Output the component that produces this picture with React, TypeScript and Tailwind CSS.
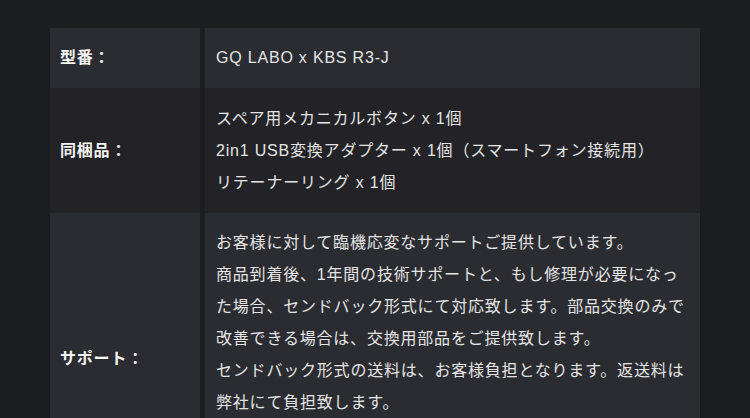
const specs = [
  {
    label: "型番：",
    lines: ["GQ LABO x KBS R3-J"],
    tone: "bg-[#2b2c31]",
    pad: "py-[14px]",
  },
  {
    label: "同梱品：",
    lines: [
      "スペア用メカニカルボタン x 1個",
      "2in1 USB変換アダプター x 1個（スマートフォン接続用）",
      "リテーナーリング x 1個",
    ],
    tone: "bg-[#232327]",
    pad: "pt-[15px] pb-[14px]",
  },
  {
    label: "サポート：",
    lines: [
      "お客様に対して臨機応変なサポートご提供しています。",
      "商品到着後、1年間の技術サポートと、もし修理が必要になった場合、センドバック形式にて対応致します。部品交換のみで改善できる場合は、交換用部品をご提供致します。",
      "センドバック形式の送料は、お客様負担となります。返送料は弊社にて負担致します。",
    ],
    tone: "bg-[#2b2c31]",
    pad: "pt-[14px] pb-[86px]",
  },
];

const App = () => {
  return (
    <div
      className="min-h-screen w-full bg-[#1c1d21] pt-[28px] px-[50px] pb-10"
      style={{ fontFamily: '"Liberation Sans", "Noto Sans CJK JP", sans-serif' }}
    >
      <div className="flex flex-col">
        {specs.map((row) => (
          <div key={row.label} className="flex gap-[5px]">
            {/* label */}
            <div
              className={`${row.tone} w-[150px] shrink-0 flex items-center pl-[10px] text-[16px] font-bold text-[#f4f4f4] tracking-[0.05em]`}
            >
              {row.label}
            </div>
            {/* value */}
            <div
              className={`${row.tone} ${row.pad} flex-1 pl-[11px] pr-[10px] text-[16px] leading-[32px] text-[#e4e4e4] tracking-[0.05em]`}
            >
              {row.lines.map((line, i) => (
                <p key={i}>{line}</p>
              ))}
            </div>
          </div>
        ))}
      </div>
    </div>
  );
};

export default App;
